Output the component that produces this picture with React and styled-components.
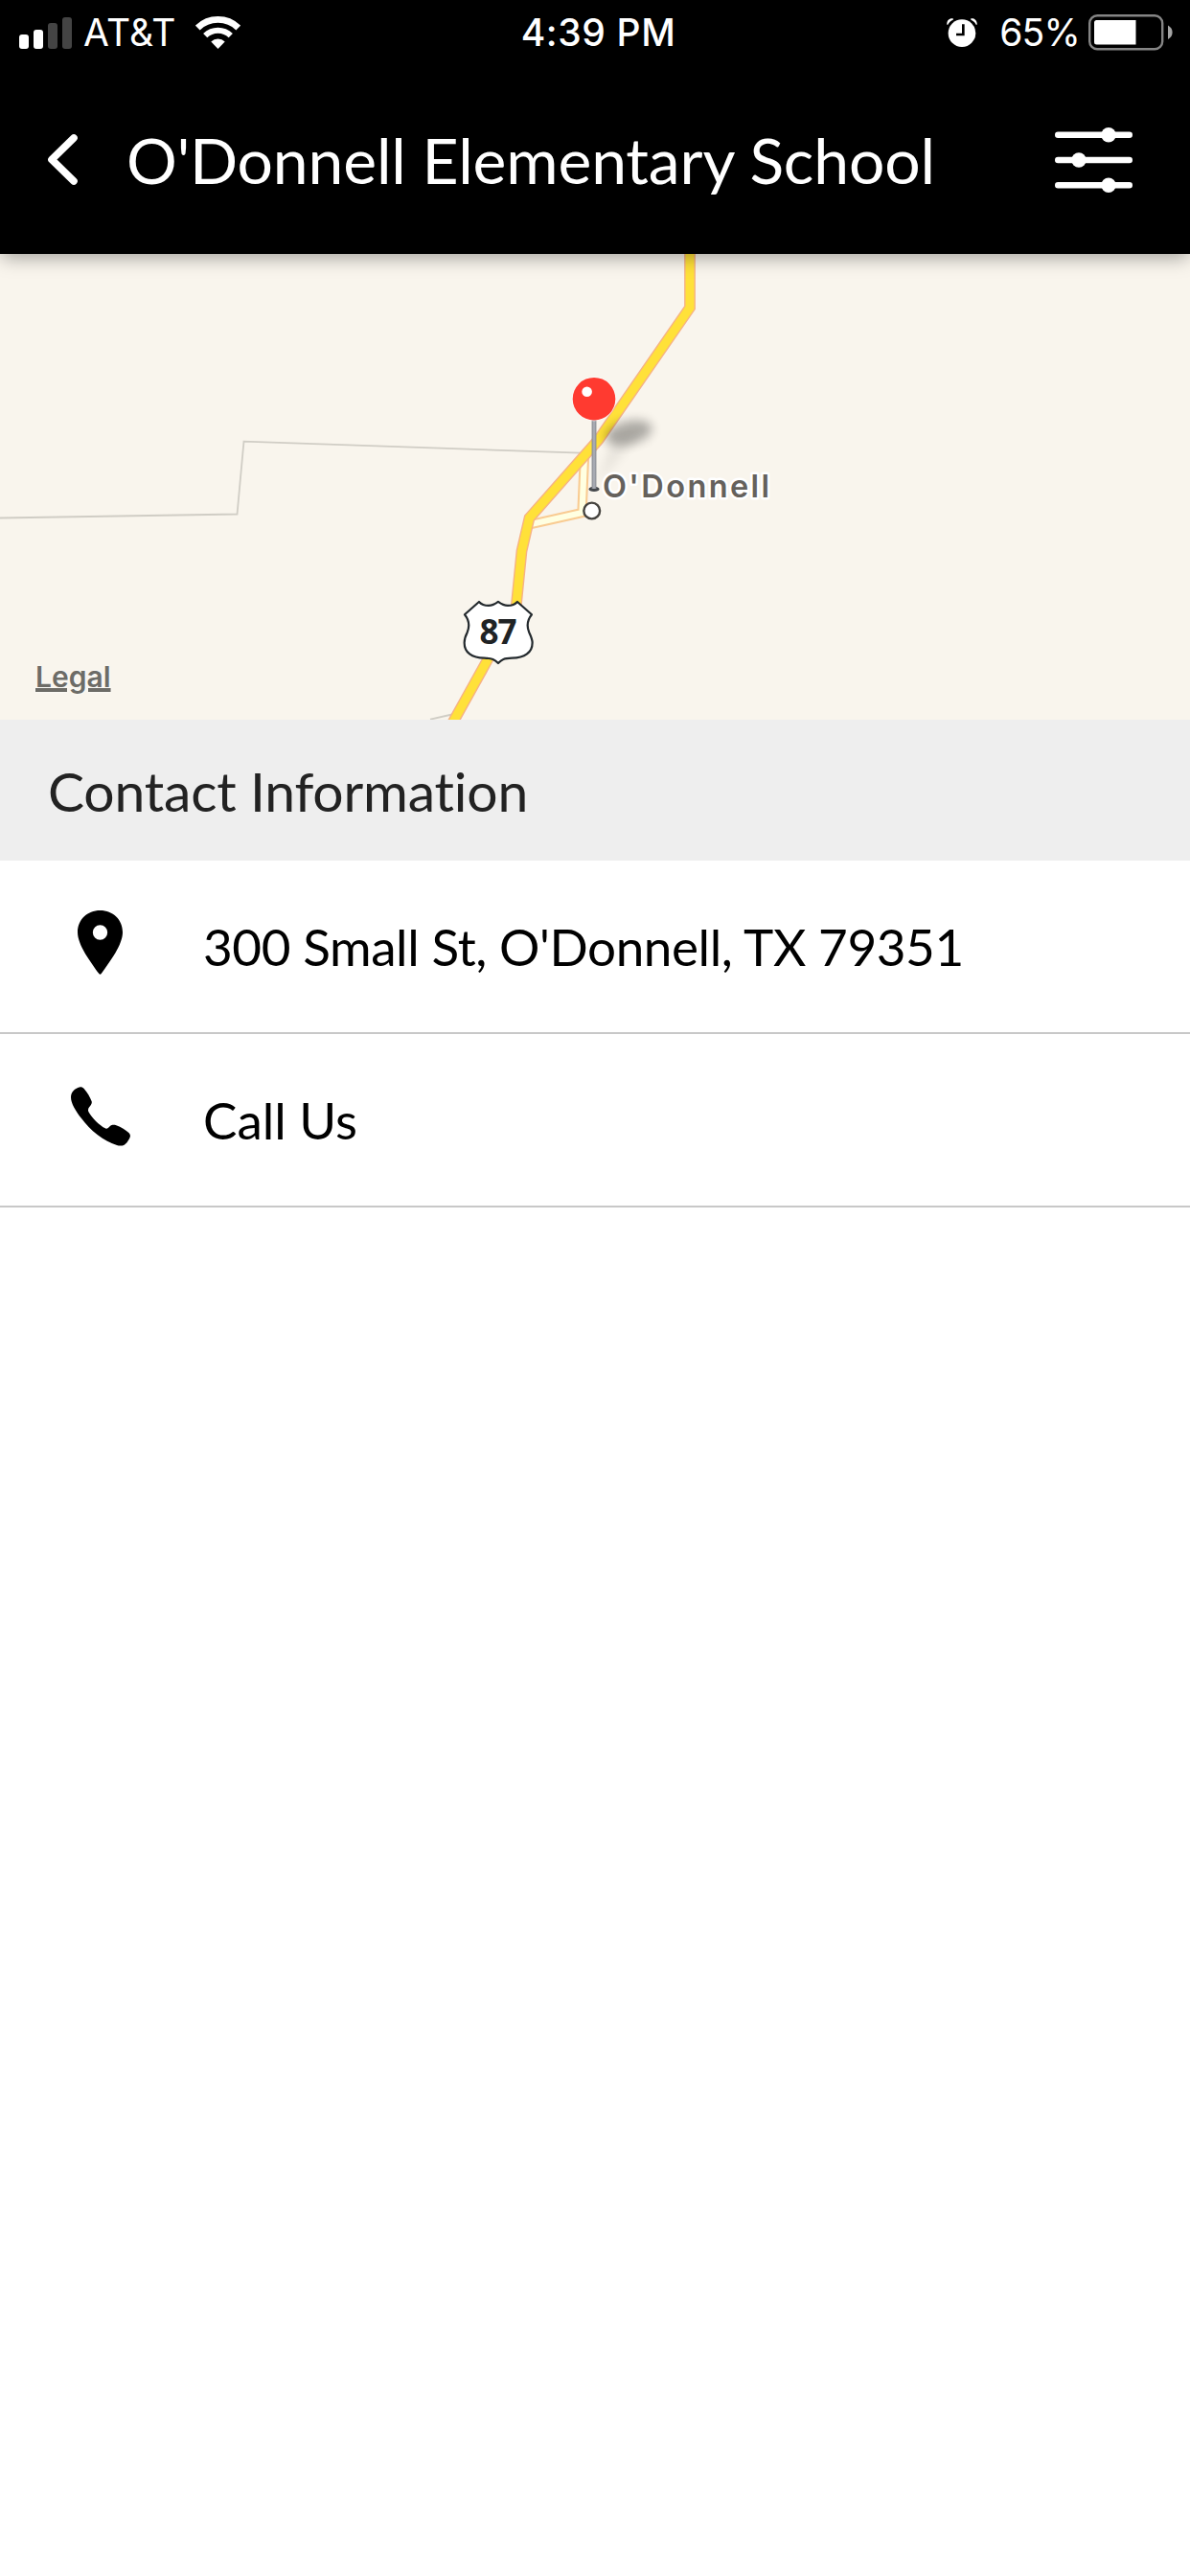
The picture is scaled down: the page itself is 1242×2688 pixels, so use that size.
/*
* School contact screen: status bar, title bar, location map and the contact rows
*/
import React from 'react';
import styled, { createGlobalStyle } from 'styled-components'

const GlobalStyle = createGlobalStyle`
    * {
        box-sizing: border-box;
    }
    body {
        margin: 0;
        background-color: #fff;
        font-family: Lato, 'Open Sans', sans-serif;
        font-variant-ligatures: none;
    }
`

const Screen = styled.div`
    display: flex;
    flex-direction: column;
    min-height: 2688px;
    background-color: #fff;
`

const Header = styled.header`
    position: relative;
    z-index: 1;
    height: 265px;
    color: #fff;
    background-color: #000;
    box-shadow: 0 6px 18px -2px rgba(0, 0, 0, 0.34);
`

const StatusBar = styled.div`
    display: grid;
    grid-template-columns: 1fr auto 1fr;
    align-items: center;
    height: 68px;
    padding: 0 18px 0 20px;
    font-family: Inter, 'Liberation Sans', sans-serif;
    font-size: 39px;
    line-height: 68px;
    white-space: nowrap;
`

const StatusGroup = styled.div`
    display: flex;
    align-items: center;
    justify-content: ${props => props.align || 'flex-start'};
`

const StatusText = styled.span`
    font-weight: ${props => props.weight || 400};
    letter-spacing: ${props => props.spacing || '0'};
    margin-left: ${props => props.gap || '0'};
`

const SignalBars = styled.div`
    display: flex;
    align-items: flex-end;
    gap: 5px;
    height: 33px;
`

const SignalBar = styled.div`
    width: 10px;
    height: ${props => props.size}px;
    border-radius: 3px;
    background-color: ${props => props.on ? '#fff' : '#444'};
`

const TitleBar = styled.div`
    display: flex;
    align-items: center;
    height: 197px;
    padding: 0 60px 0 50px;
`

const Title = styled.h1`
    flex: 1;
    margin: 0 0 0 48px;
    font-size: 66px;
    font-weight: 400;
    line-height: 80px;
    letter-spacing: -0.15px;
    white-space: nowrap;
`

const MapView = styled.section`
    position: relative;
    height: 486px;
    background-color: #f9f5ed;
    svg {
        display: block;
    }
`

const LegalLink = styled.a`
    position: absolute;
    left: 37px;
    top: 423px;
    color: #6d6c67;
    font-family: Inter, 'Liberation Sans', sans-serif;
    font-size: 30px;
    font-weight: 600;
    line-height: 36px;
    text-decoration: underline;
    text-decoration-thickness: 4px;
    text-underline-offset: 1px;
    text-shadow: 0 0 3px #fff;
`

const SectionHeading = styled.h2`
    margin: 0;
    height: 147px;
    padding-left: 50px;
    color: #222;
    background-color: #eee;
    font-size: 57px;
    font-weight: 400;
    line-height: 149px;
    letter-spacing: -0.17px;
`

const ContactRow = styled.div`
    display: flex;
    align-items: center;
    height: 181px;
    border-bottom: 2px solid #c8c8c8;
    color: #000;
    font-size: 53px;
    line-height: 64px;
    letter-spacing: ${props => props.spacing};
    white-space: nowrap;
`

const RowIcon = styled.div`
    display: flex;
    justify-content: center;
    width: 209px;
    margin-right: 3px;
    padding-bottom: 8px;
`

const Wifi = () => (
    <svg width="47" height="34" viewBox="0 0 140 101">
        <g fill="none" stroke="#fff">
            <path d="M6.8 35.6A91 91 0 0 1 133.2 35.6" strokeWidth="20" />
            <path d="M30.4 60A57 57 0 0 1 109.6 60" strokeWidth="18" />
        </g>
        <path d="M70 101L48.5 78.7A31 31 0 0 1 91.5 78.7Z" fill="#fff" />
    </svg>
)

const Alarm = () => (
    <svg width="32" height="30" viewBox="0 0 96 90">
        <circle cx="48" cy="47" r="43" fill="#fff" />
        <path d="M52 19V51H30" fill="none" stroke="#000" strokeWidth="8" />
        <path d="M1 19C0 8 8 0 19 1C23 3 21 5 17 7C11 10 8 13 5 19C3 22 1 21 1 19Z" fill="#fff" />
        <path d="M95 19C96 8 88 0 77 1C73 3 75 5 79 7C85 10 88 13 91 19C93 22 95 21 95 19Z" fill="#fff" />
    </svg>
)

const Battery = () => (
    <svg width="88" height="38" viewBox="0 0 88 38">
        <rect x="1.2" y="1.2" width="76" height="35" rx="8" fill="none" stroke="#858585" strokeWidth="2.4" />
        <path d="M8.5 6H49.5V31.5H8.5Q6 31.5 6 29V8.5Q6 6 8.5 6Z" fill="#fff" />
        <path d="M83 11.5Q87.6 14 87.6 18.8T83 26Z" fill="#a5a5a5" />
    </svg>
)

const BackIcon = () => (
    <svg width="34" height="56" viewBox="0 0 34 56">
        <path d="M27 5L4 27.5L27 50" fill="none" stroke="#fff" strokeWidth="7.6" strokeLinecap="round" strokeLinejoin="round" />
    </svg>
)

const FilterIcon = () => (
    <svg width="81" height="70" viewBox="0 0 81 70">
        <path d="M3.2 8.7H77.8M3.2 35H77.8M3.2 61.3H77.8" stroke="#fff" strokeWidth="6.4" strokeLinecap="round" />
        <g fill="#fff">
            <circle cx="56" cy="8.7" r="7.7" />
            <circle cx="25" cy="35" r="7.7" />
            <circle cx="56" cy="61.3" r="7.7" />
        </g>
    </svg>
)

const MarkerIcon = () => (
    <svg width="47" height="67" viewBox="0 0 141 201">
        <path
            d="M70.5 0C30 0 0 29 0 68C0 108 40 160 67 198C69 201 72 201 74 198C101 160 141 108 141 68C141 29 111 0 70.5 0ZM70.5 46A23 23 0 1 1 70.5 92A23 23 0 1 1 70.5 46Z"
            fillRule="evenodd"
        />
    </svg>
)

const PhoneIcon = () => (
    <svg width="62" height="62" viewBox="0 0 186 182" preserveAspectRatio="none">
        <path d="M0 32C0 18 10 8 22 3C30-1 36 1 41 6C52 18 60 32 65 45C67 51 62 57 58 62C54 67 53 71 55 76C66 96 88 117 109 128C113 130 117 126 122 121C128 116 134 116 142 118C157 123 172 132 182 142C187 148 187 152 183 159C178 168 173 174 167 178C161 181 152 182 144 179C102 167 60 133 33 97C15 74 0 50 0 32Z" />
    </svg>
)

const highway = 'M720-5V56L624.5 194L552.5 275.5L544.5 310L538.5 370L507.5 426L472 490'
const street = 'M610 210L607.5 270L552 282.5'

/**
 * Draws the roads, the town label and the dropped pin
 * @returns the Map drawing
 */
const TownMap = () => (
    <svg width="1242" height="486" viewBox="0 0 1242 486">
        <defs>
            <filter id="soft" x="-50%" y="-80%" width="200%" height="260%">
                <feGaussianBlur stdDeviation="5.5" />
            </filter>
            <linearGradient id="stem" x1="0" x2="1" y1="0" y2="0">
                <stop offset="0" stopColor="#84878d" />
                <stop offset="0.5" stopColor="#b0b3bb" />
                <stop offset="1" stopColor="#84878d" />
            </linearGradient>
        </defs>
        <g fill="none" strokeLinejoin="miter">
            <path d="M0 275.5L247.5 271.5L254.5 195.7L606 207.7" stroke="#d0cdc5" strokeWidth="1.8" />
            <path d="M449 485.7L474 480" stroke="#d0cdc5" strokeWidth="1.8" />
            <path d={street} stroke="#f9cb92" strokeWidth="10.4" />
            <path d={street} stroke="#ffffe1" strokeWidth="6.2" />
            <path d={highway} stroke="#f6b285" strokeWidth="11.8" />
            <path d={highway} stroke="#ffe139" strokeWidth="9" />
        </g>

        <ellipse cx="656" cy="186.5" rx="25" ry="12" transform="rotate(-13 656 186.5)" fill="#000" opacity="0.31" filter="url(#soft)" />
        <path d="M621 243L640 194L665 190Z" fill="#000" opacity="0.07" filter="url(#soft)" />

        <circle cx="617.7" cy="268" r="8.4" fill="#fff" stroke="#45433f" strokeWidth="2.4" />
        <text
            x="629" y="254.3" textLength="174"
            fontFamily="Inter, 'Liberation Sans', sans-serif" fontSize="32.5" fontWeight="600"
            fill="#65615c" stroke="#fff" strokeWidth="5" strokeLinejoin="round" paintOrder="stroke"
        >O'Donnell</text>

        <ellipse cx="620" cy="245.4" rx="5.5" ry="2.6" fill="#45484c" />
        <rect x="617.6" y="172" width="4.8" height="73" fill="url(#stem)" />
        <circle cx="620" cy="151.2" r="23.2" fill="#fff" opacity="0.6" />
        <circle cx="620" cy="151.2" r="22.3" fill="#ff3a30" />
        <circle cx="612.6" cy="143.8" r="5.3" fill="#fff" />

        <g transform="translate(484.3 362.3) scale(0.3333)">
            <path
                d="M47 2C56 12 66 14 77 14C90 14 99 8 107 2C115 8 124 14 137 14C148 14 158 12 167 2L212 42C196 62 198 84 204 98C212 115 214 120 214 130C214 160 190 178 150 178C125 179 118 182 107 194C96 182 89 179 64 178C24 178 1 160 1 130C1 120 4 110 10 98C16 84 18 62 2 42Z"
                fill="#fff" stroke="#23292d" strokeWidth="6.6" strokeLinejoin="round"
            />
        </g>
        <text
            x="519.5" y="406.7" textAnchor="middle" letterSpacing="-1"
            fontFamily="'Open Sans', 'Noto Sans', sans-serif" fontSize="35" fontWeight="700" fill="#202325"
        >87</text>
    </svg>
)

const signal = [
    { size: 15, on: true },
    { size: 20, on: true },
    { size: 27, on: false },
    { size: 33, on: false }
]

const contacts = [
    { label: "300 Small St, O'Donnell, TX 79351", icon: <MarkerIcon />, spacing: '-0.4px' },
    { label: 'Call Us', icon: <PhoneIcon />, spacing: '0' }
]

const App = () => {
    return (
        <Screen>
            <GlobalStyle />
            <Header>
                <StatusBar>
                    <StatusGroup>
                        <SignalBars>
                            {signal.map((bar, index) => <SignalBar size={bar.size} on={bar.on} key={index} />)}
                        </SignalBars>
                        <StatusText gap="12px" spacing="0.3px">AT&amp;T</StatusText>
                        <StatusText gap="20px"><StatusGroup><Wifi /></StatusGroup></StatusText>
                    </StatusGroup>
                    <StatusText weight={500} spacing="0.6px" gap="5px">4:39 PM</StatusText>
                    <StatusGroup align="flex-end">
                        <Alarm />
                        <StatusText gap="23px" spacing="-0.8px">65%</StatusText>
                        <StatusText gap="9px"><StatusGroup><Battery /></StatusGroup></StatusText>
                    </StatusGroup>
                </StatusBar>
                <TitleBar>
                    <BackIcon />
                    <Title>O'Donnell Elementary School</Title>
                    <FilterIcon />
                </TitleBar>
            </Header>
            <MapView>
                <TownMap />
                <LegalLink>Legal</LegalLink>
            </MapView>
            <SectionHeading>Contact Information</SectionHeading>
            {contacts.map((contact, index) => {
                return (
                    <ContactRow spacing={contact.spacing} key={index}>
                        <RowIcon>{contact.icon}</RowIcon>
                        {contact.label}
                    </ContactRow>
                )
            })}
        </Screen>
    )
}

export default App;
